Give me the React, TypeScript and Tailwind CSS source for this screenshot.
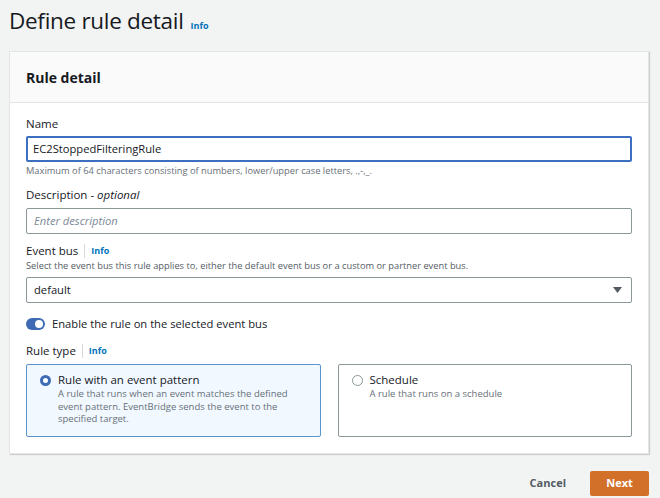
export default function App() {
  return (
    <div
      className="w-[660px] h-[498px] bg-[#f2f3f3] text-[#16191f] overflow-hidden"
      style={{ fontFamily: '"Open Sans", "Noto Sans", Arial, sans-serif' }}
    >
      <div className="px-[9px] pt-[3px]">
        <div className="flex items-baseline h-[40px]">
          <h1 className="text-[22.5px] leading-[36px] font-normal tracking-[-0.3px]">Define rule detail</h1>
          <a className="ml-[7px] text-[9px] font-bold text-[#0073bb]">Info</a>
        </div>

        <div className="mt-[8px] w-[640px] bg-white border border-[#e3e5e5] shadow-[1px_1px_1px_rgba(0,0,0,0.15)]">
          <div className="h-[51px] bg-[#fafafa] border-b border-[#e3e5e5] flex items-center px-[16px]">
            <h2 className="text-[14px] font-bold">Rule detail</h2>
          </div>

          <div className="px-[16px] pt-[13px] pb-[16px]">
            <label className="block text-[11.5px] leading-[16px]">Name</label>
            <div className="mt-[4px] h-[26px] border-2 border-[#3d6fc0] rounded-[2px] flex items-center px-[5px] text-[11.2px]">
              EC2StoppedFilteringRule
            </div>
            <p className="mt-[2px] text-[9.3px] leading-[14px] text-[#687078]">
              Maximum of 64 characters consisting of numbers, lower/upper case letters, .,-,_.
            </p>

            <label className="block mt-[9px] text-[11.5px] leading-[16px]">
              Description - <i>optional</i>
            </label>
            <div className="mt-[5px] h-[26px] border border-[#8a9899] rounded-[2px] flex items-center px-[7px] text-[11.2px] italic text-[#7d8998]">
              Enter description
            </div>

            <div className="mt-[9px] flex items-center text-[11.5px] leading-[16px]">
              <span>Event bus</span>
              <span className="mx-[6px] h-[14px] w-px bg-[#d5dbdb]" />
              <a className="text-[9px] font-bold text-[#0073bb]">Info</a>
            </div>
            <p className="text-[9.3px] leading-[14px] text-[#545b64]">
              Select the event bus this rule applies to, either the default event bus or a custom or partner event bus.
            </p>
            <div className="mt-[4px] h-[26px] border border-[#8a9899] rounded-[2px] flex items-center justify-between px-[7px] text-[11.2px]">
              <span>default</span>
              <svg width="9" height="6" viewBox="0 0 9 6" className="mr-[2px]">
                <path d="M0 0 H9 L4.5 6 Z" fill="#545b64" />
              </svg>
            </div>

            <div className="mt-[13px] flex items-center h-[16px]">
              <span className="relative w-[19px] h-[12px] rounded-full bg-[#3f6bb5]">
                <span className="absolute right-[2px] top-[2px] w-[8px] h-[8px] rounded-full bg-white" />
              </span>
              <span className="ml-[7px] text-[11.2px]">Enable the rule on the selected event bus</span>
            </div>

            <div className="mt-[11px] flex items-center text-[11.5px] leading-[16px]">
              <span>Rule type</span>
              <span className="mx-[6px] h-[14px] w-px bg-[#d5dbdb]" />
              <a className="text-[9px] font-bold text-[#0073bb]">Info</a>
            </div>

            <div className="mt-[5px] grid grid-cols-2 gap-[17px] h-[73px]">
              <div className="border border-[#5b93cf] bg-[#f1f8ff] rounded-[2px] flex pl-[13px] pt-[7px] pr-[14px]">
                <span className="mt-[3px] w-[11px] h-[11px] rounded-full border-[3px] border-[#3f6bb5] bg-white shrink-0" />
                <div className="ml-[7px]">
                  <div className="text-[11.5px] leading-[16px]">Rule with an event pattern</div>
                  <p className="text-[9.5px] leading-[12.5px] text-[#687078]">
                    A rule that runs when an event matches the defined event pattern. EventBridge sends the event to the specified target.
                  </p>
                </div>
              </div>
              <div className="border border-[#8a9899] rounded-[2px] flex pl-[13px] pt-[7px]">
                <span className="mt-[3px] w-[11px] h-[11px] rounded-full border border-[#8a9899] bg-white shrink-0" />
                <div className="ml-[7px]">
                  <div className="text-[11.5px] leading-[16px]">Schedule</div>
                  <p className="text-[9.5px] leading-[12.5px] text-[#687078]">A rule that runs on a schedule</p>
                </div>
              </div>
            </div>
          </div>
        </div>

        <div className="mt-[17px] w-[640px] flex justify-end items-center">
          <button className="text-[11px] font-bold text-[#545b64] mr-[24px]">Cancel</button>
          <button className="w-[59px] h-[25px] rounded-[2px] bg-[#d2702a] text-white text-[11px] font-bold">Next</button>
        </div>
      </div>
    </div>
  );
}
